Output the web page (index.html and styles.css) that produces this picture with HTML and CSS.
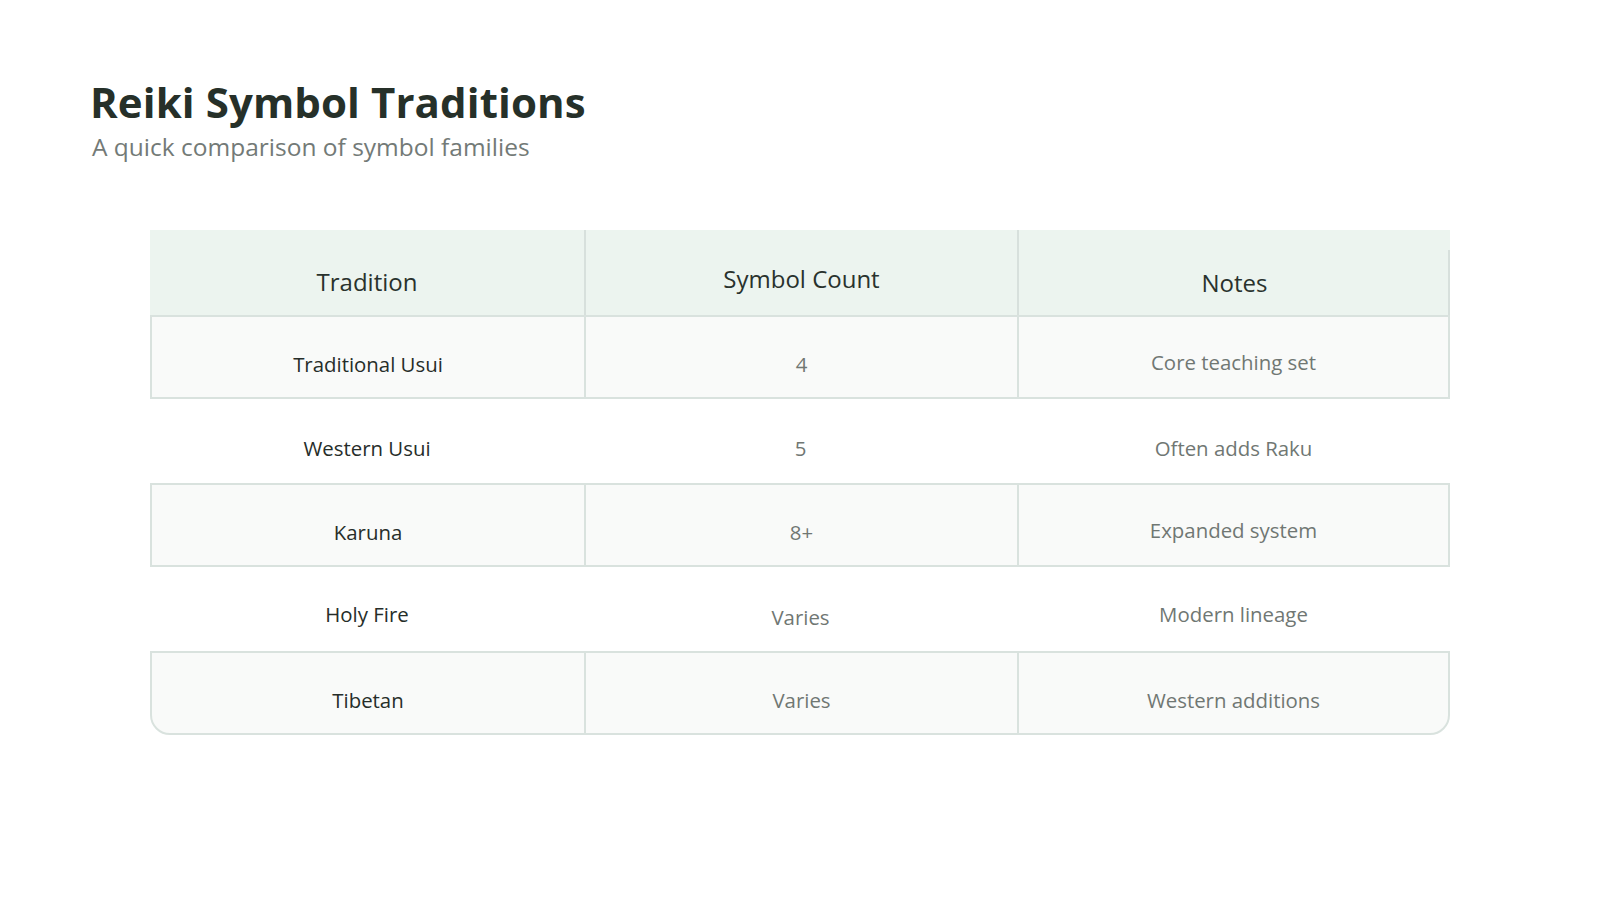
FILE: index.html
```html
<!DOCTYPE html>
<html lang="en">
<head>
<meta charset="utf-8">
<title>Reiki Symbol Traditions</title>
<link rel="stylesheet" href="styles.css">
</head>
<body>
<main class="page">
  <header class="intro">
    <h1 class="title">Reiki Symbol Traditions</h1>
    <p class="subtitle">A quick comparison of symbol families</p>
  </header>
  <section class="table-wrap">
    <div class="table">
      <div class="row head">
        <div class="cell">Tradition</div>
        <div class="cell up">Symbol Count</div>
        <div class="cell last">Notes</div>
      </div>
      <div class="row band">
        <div class="cell name">Traditional Usui</div>
        <div class="cell muted">4</div>
        <div class="cell muted up">Core teaching set</div>
      </div>
      <div class="row">
        <div class="cell name">Western Usui</div>
        <div class="cell muted">5</div>
        <div class="cell muted">Often adds Raku</div>
      </div>
      <div class="row band">
        <div class="cell name">Karuna</div>
        <div class="cell muted">8+</div>
        <div class="cell muted up">Expanded system</div>
      </div>
      <div class="row raised">
        <div class="cell name">Holy Fire</div>
        <div class="cell muted down">Varies</div>
        <div class="cell muted">Modern lineage</div>
      </div>
      <div class="row band foot">
        <div class="cell name">Tibetan</div>
        <div class="cell muted">Varies</div>
        <div class="cell muted">Western additions</div>
      </div>
    </div>
  </section>
</main>
</body>
</html>
```

FILE: styles.css
```css
* { box-sizing: border-box; }

html, body {
  margin: 0;
  padding: 0;
  background: #ffffff;
}

body {
  font-family: "Open Sans", "Noto Sans", "Liberation Sans", sans-serif;
  color: #263029;
}

.page {
  width: 1600px;
  height: 900px;
  padding: 75px 90px 0 90px;
}

.intro {
  display: flex;
  flex-direction: column;
}

.title {
  margin: 0;
  font-size: 42px;
  font-weight: 700;
  line-height: 54px;
  color: #263029;
  letter-spacing: 0.1px;
}

.subtitle {
  margin: 0;
  padding-left: 2px;
  font-size: 24.5px;
  line-height: 36px;
  color: #737a77;
  font-weight: 400;
}

.table-wrap {
  padding: 65px 60px 0 60px;
}

.table {
  width: 1300px;
  display: flex;
  flex-direction: column;
}

.row {
  display: grid;
  grid-template-columns: 434px 433px 433px;
  height: 84px;
}

.cell {
  display: flex;
  align-items: center;
  justify-content: center;
  padding-top: 13px;
  font-size: 20.4px;
  color: #707773;
}

.cell.name {
  color: #262d29;
}

.cell.up { padding-top: 9px; }
.cell.down { padding-top: 17px; }

.raised .cell { padding-top: 10px; }
.raised .cell.down { padding-top: 16px; }

.head {
  background: #ecf4ef;
  height: 85px;
}

.head .cell {
  font-size: 24px;
  color: #29322d;
  padding-top: 18px;
}

.head .cell.up { padding-top: 12px; }
.head .cell.last { padding-top: 19px; }

.head .cell + .cell {
  border-left: 2px solid #d7e0dc;
}

.head .cell.last {
  background-image: linear-gradient(#d7e0dc, #d7e0dc);
  background-repeat: no-repeat;
  background-size: 2px calc(100% - 20px);
  background-position: right bottom;
}

.band {
  grid-template-columns: 432px 433px 431px;
  background: #f9faf9;
  border: 2px solid #d9e2de;
}

.band .cell + .cell {
  border-left: 2px solid #d9e2de;
}

.band.foot {
  border-radius: 0 0 20px 20px;
}
```
